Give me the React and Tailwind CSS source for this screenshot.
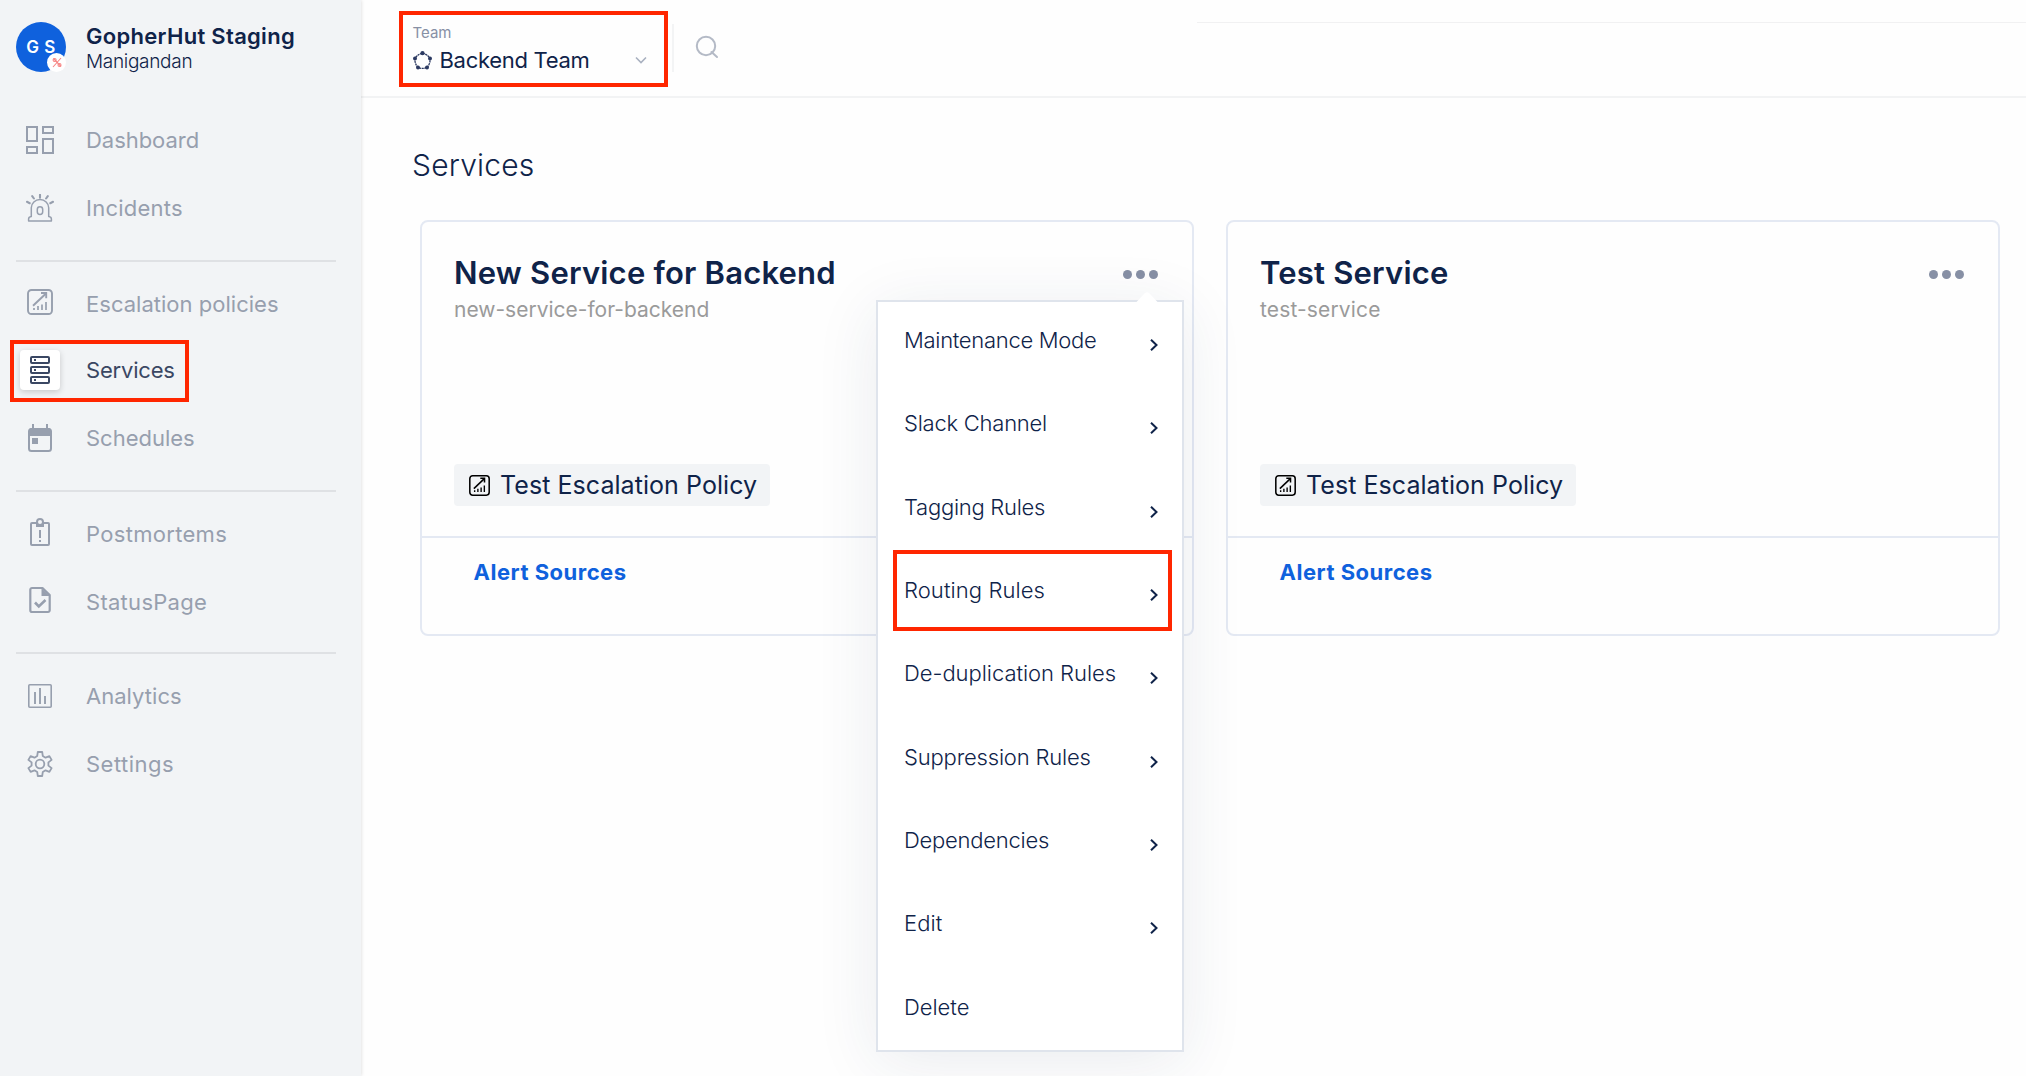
import React from "react";

function DashboardIcon() {
  return (
    <svg width="28" height="28" viewBox="0 0 28 28" fill="none" stroke="currentColor" strokeWidth="2">
      <path d="M1 1h10v14H1zM17 1h10v6H17zM1 21h10v6H1zM17 13h10v14H17z" />
    </svg>
  );
}

function IncidentsIcon() {
  return (
    <svg width="28" height="28" viewBox="0 0 28 28" fill="none" stroke="currentColor">
      <path d="M5.3 22.5V13.8a8.7 8.2 0 0 1 17.4 0v8.700c2 .3 2.700 1.200 2.700 2.500v1.900H2.600V25c0-1.300.7-2.200 2.700-2.500z" strokeWidth="1.500" strokeLinejoin="round" />
      <rect x="11.300" y="12.800" width="5.400" height="7.600" rx="2.700" strokeWidth="1.500" />
      <path d="M14 .8v3M6.200 2.200l1.700 2.300M21.800 2.200l-1.700 2.300M1 7.800l2.700 1.400M27 7.800l-2.700 1.400" strokeWidth="2.100" strokeLinecap="round" />
    </svg>
  );
}

function EscalationIcon({ size = 26 }) {
  return (
    <svg width={size} height={size} viewBox="0 0 26 26" fill="none" stroke="currentColor">
      <rect x="1" y="1" width="24" height="24" rx="3.500" strokeWidth="1.900" />
      <path d="M6 16.800L19 4.500" strokeWidth="1.900" />
      <path d="M14 4h5.200v5.200" strokeWidth="1.900" />
      <path d="M7 19v2M11 17v4M15 15.500V21M19 13v8" strokeWidth="1.700" />
    </svg>
  );
}

function ServicesIcon() {
  return (
    <svg width="20" height="28" viewBox="0 0 20 28" fill="none" stroke="currentColor" strokeWidth="2">
      <rect x="1" y="1" width="18" height="6" rx="1" />
      <rect x="1" y="11" width="18" height="6" rx="1" />
      <rect x="1" y="21" width="18" height="6" rx="1" />
      <path d="M4 4h2M4 14h2M4 24h2" />
    </svg>
  );
}

function SchedulesIcon() {
  return (
    <svg width="24" height="28" viewBox="0 0 24 28" fill="none">
      <rect x="1" y="5" width="22" height="22" rx="2.500" stroke="currentColor" strokeWidth="2" />
      <path d="M1 6.500A2.500 2.500 0 0 1 3.500 4h17A2.500 2.500 0 0 1 23 6.500V12H1zM4 0h2v5H4zM18 0h2v5h-2zM4 14h6v6H4z" fill="currentColor" />
    </svg>
  );
}

function PostmortemsIcon() {
  return (
    <svg width="20" height="28" viewBox="0 0 20 28" fill="none" stroke="currentColor">
      <rect x="1" y="5" width="18" height="22" rx="1" strokeWidth="2" />
      <path d="M6 5.500V9h8V5.500z" fill="currentColor" stroke="none" />
      <circle cx="10" cy="4" r="3" strokeWidth="2" fill="#f2f4f6" />
      <path d="M10 12v8M10 22v2" strokeWidth="2" />
    </svg>
  );
}

function StatusPageIcon() {
  return (
    <svg width="22" height="28" viewBox="0 0 22 28" fill="none" stroke="currentColor" strokeWidth="2.200">
      <path d="M13.500 2H3a1.700 1.700 0 0 0-1.700 1.700v20.600A1.700 1.700 0 0 0 3 26h16a1.700 1.700 0 0 0 1.700-1.700V9z" strokeLinejoin="round" />
      <path d="M12.500 2v8h8.200z" fill="currentColor" stroke="none" />
      <path d="M6 16.500l3.800 4L16.500 14" strokeWidth="2.600" />
    </svg>
  );
}

function AnalyticsIcon() {
  return (
    <svg width="24" height="24" viewBox="0 0 24 24" fill="none" stroke="currentColor">
      <rect x=".8" y=".8" width="22.400" height="22.400" rx="1" strokeWidth="1.600" />
      <path d="M7 8v12M12 4v16M17 12v8" strokeWidth="1.900" />
    </svg>
  );
}

function SettingsIcon() {
  return (
    <svg width="26" height="26" viewBox="0 0 26 26" fill="none" stroke="currentColor" strokeWidth="1.800" strokeLinejoin="round">
      <path d="M10.800 1h4.400l.6 4.100 2.700 1.600 3.900-1.600 2.200 3.800-3.200 2.500v3.200l3.200 2.500-2.200 3.800-3.900-1.600-2.700 1.600-.6 4.100h-4.400l-.6-4.100-2.700-1.600-3.900 1.600-2.200-3.800 3.200-2.500v-3.200L1.400 8.900l2.200-3.800 3.900 1.600 2.700-1.600z" />
      <circle cx="13" cy="13" r="4.300" />
    </svg>
  );
}

function TeamIcon() {
  return (
    <svg width="19" height="19" viewBox="0 0 19 19" fill="none">
      <path d="M9.500 2.200Q14.500 3.200 17 7.600Q17.500 12.500 14 16.500Q9.500 18.400 5 16.500Q1.500 12.500 2 7.600Q4.500 3.200 9.500 2.200" stroke="#2b3961" strokeWidth="1.300" strokeDasharray="2.200 .6" />
      <g fill="#2b3961">
        <circle cx="9.500" cy="2.200" r="2.100" />
        <circle cx="17" cy="7.600" r="2" />
        <circle cx="14" cy="16.500" r="2" />
        <circle cx="5" cy="16.500" r="2" />
        <circle cx="2" cy="7.600" r="2" />
      </g>
    </svg>
  );
}

function Chevron() {
  return (
    <svg className="relative top-[5px]" width="8" height="12" viewBox="0 0 8 12" fill="none" stroke="#0f2349" strokeWidth="2">
      <path d="M1 .8L6.500 6 1 11.200" />
    </svg>
  );
}

const groups = [
  [
    { label: "Dashboard", Icon: DashboardIcon, text: "tracking-[-0.04px]" },
    { label: "Incidents", Icon: IncidentsIcon, text: "tracking-[0.24px]" },
  ],
  [
    { label: "Escalation policies", Icon: EscalationIcon, text: "tracking-[0.02px] pt-1" },
    { label: "Services", Icon: ServicesIcon, text: "tracking-[-0.19px]", active: true },
    { label: "Schedules", Icon: SchedulesIcon, text: "tracking-[-0.02px]" },
  ],
  [
    { label: "Postmortems", Icon: PostmortemsIcon, text: "tracking-[0.31px] pt-1" },
    { label: "StatusPage", Icon: StatusPageIcon, text: "tracking-[0.28px] pt-1" },
  ],
  [
    { label: "Analytics", Icon: AnalyticsIcon, text: "tracking-[0.03px]" },
    { label: "Settings", Icon: SettingsIcon, text: "tracking-[0.48px]" },
  ],
];

const groupSpacing = ["pb-[18px]", "border-t-2 pt-[6px] pb-[18px]", "border-t-2 pt-[6px] pb-[18px]", "border-t-2 pt-2"];

function NavItem({ label, Icon, text, active }) {
  return (
    <li className="relative flex h-[68px] items-center">
      <span
        className={
          active
            ? "flex size-10 ml-1 items-center justify-center rounded bg-white text-[#3a4763] shadow-[0_2px_6px_rgba(0,0,0,0.18)]"
            : "flex size-10 ml-1 items-center justify-center text-[#979fae]"
        }
      >
        <Icon />
      </span>
      <span className={`ml-[26px] text-[22px] leading-6 ${text} ${active ? "text-[#3a4763]" : "text-[#979fae]"}`}>{label}</span>
      {active && <span className="absolute -left-[6px] top-1 h-[62px] w-[179px] border-4 border-[#ff2600]" />}
    </li>
  );
}

function Sidebar() {
  return (
    <aside className="z-10 flex w-[361px] shrink-0 flex-col bg-[#f2f4f6] px-4 pt-[22px] shadow-[0_0_4px_rgba(0,0,0,0.16)]">
      <div className="flex h-[84px] items-start">
        <div className="relative flex size-[50px] items-center justify-center rounded-full bg-[#0f61dd]">
          <span className="text-[17px] font-semibold leading-5 tracking-[0.5px] text-white">G S</span>
          <span className="absolute bottom-0 right-0 flex size-[19px] items-center justify-center rounded-full bg-white">
            <svg width="10" height="11" viewBox="0 0 10 11" fill="none" stroke="#f78584" strokeWidth="1.100">
              <path d="M1 10L9 1M1.500 1.500l7.500 8" />
              <circle cx="2.600" cy="3" r="1.500" />
              <circle cx="7.500" cy="8" r="1.500" />
            </svg>
          </span>
        </div>
        <div className="ml-5 flex flex-col">
          <span className="mt-[2px] text-[22px] font-semibold leading-[25px] tracking-[0.3px] text-[#0f2349]">GopherHut Staging</span>
          <span className="text-[19px] font-light leading-[25px] tracking-[-0.3px] text-[#0f2349]">Manigandan</span>
        </div>
      </div>
      <nav className="w-80">
        {groups.map((items, i) => (
          <ul key={items[0].label} className={`border-[#dfe1e4] ${groupSpacing[i]}`}>
            {items.map((item) => (
              <NavItem key={item.label} {...item} />
            ))}
          </ul>
        ))}
      </nav>
    </aside>
  );
}

function Header() {
  return (
    <header className="flex h-[98px] shrink-0 border-b-2 border-[#f2f3f4]">
      <div className="ml-[38px] mt-[11px] flex h-[76px] w-[269px] flex-col border-4 border-[#ff2600] pl-[9.5px] pr-[17px]">
        <span className="mt-[8px] text-[15px] leading-5 text-[#8790a5]">Team</span>
        <div className="mt-[5px] flex h-6 items-center">
          <TeamIcon />
          <span className="ml-[8px] text-[22px] leading-6 tracking-[-0.3px] text-[#0f2349]">Backend Team</span>
          <svg className="ml-auto" width="12" height="8" viewBox="0 0 12 8" fill="none" stroke="#a9b1c0" strokeWidth="1.600">
            <path d="M1 1.500l5 5 5-5" />
          </svg>
        </div>
      </div>
      <span className="ml-1 mt-6 h-12 w-[2px] bg-[#f3f4f5]" />
      <svg className="ml-[21px] mt-[35px]" width="24" height="24" viewBox="0 0 24 24" fill="none" stroke="#b4bac6" strokeWidth="2">
        <circle cx="11" cy="11" r="9.200" />
        <path d="M16.500 17l5.500 5" strokeLinecap="round" />
      </svg>
      <span className="ml-auto mt-[22px] h-px w-[829px] bg-[#f1f1f2]" />
    </header>
  );
}

function ServiceCard({ name, slug, nameTracking, slugTracking, children }) {
  return (
    <article className="relative flex h-[416px] w-[774px] flex-col rounded-lg border-2 border-[#e4e9f3]">
      <div className="flex h-[314px] flex-col items-start px-8">
        <div className="mt-[33px] flex h-9 w-full items-center justify-between pr-[2px]">
          <h2 className={`text-[31px] font-semibold leading-9 text-[#0f2349] ${nameTracking}`}>{name}</h2>
          <span className="flex gap-1 pt-[2px]">
            <span className="size-[9px] rounded-full bg-[#8790a5]" />
            <span className="size-[9px] rounded-full bg-[#8790a5]" />
            <span className="size-[9px] rounded-full bg-[#8790a5]" />
          </span>
        </div>
        <span className={`mt-[6px] text-[21px] leading-[25px] text-[#9a9a9a] ${slugTracking}`}>{slug}</span>
        <div className="mt-auto mb-[30px] flex h-[42px] w-[316px] items-center rounded bg-[#f2f4f6] pl-[15px] text-black">
          <EscalationIcon size={21} />
          <span className="ml-[10px] whitespace-nowrap text-[25px] leading-8 tracking-[0.06px] text-[#0f2349]">Test Escalation Policy</span>
        </div>
      </div>
      <div className="flex flex-1 border-t-2 border-[#e4e9f3] pl-[51.5px] pt-[21px]">
        <a className="text-[22px] font-bold leading-[26px] tracking-[0.5px] text-[#0f61dd]">Alert Sources</a>
      </div>
      {children}
    </article>
  );
}

const menu = [
  { label: "Maintenance Mode", tracking: "tracking-[-0.3px]" },
  { label: "Slack Channel", tracking: "tracking-[-0.24px]" },
  { label: "Tagging Rules", tracking: "tracking-[-0.27px]" },
  { label: "Routing Rules", tracking: "tracking-[0.08px]", marked: true },
  { label: "De-duplication Rules", tracking: "tracking-[-0.04px]" },
  { label: "Suppression Rules", tracking: "tracking-[-0.18px]" },
  { label: "Dependencies", tracking: "tracking-[-0.25px]" },
  { label: "Edit", tracking: "tracking-[0.1px]" },
  { label: "Delete", tracking: "tracking-[-0.04px]", leaf: true },
];

function ServiceMenu() {
  return (
    <div className="absolute left-[454px] top-[78px] z-20 h-[752px] w-[308px] border-2 border-[#dfe4ec] bg-white shadow-[0_10px_60px_rgba(30,50,90,0.09)]">
      <svg className="absolute -top-[10px] right-[24px]" width="22" height="11" viewBox="0 0 22 11">
        <path d="M0 10.500L8.500 1.500Q11-.8 13.500 1.500L22 10.500V11H0z" fill="#fff" />
      </svg>
      <ul className="flex h-full flex-col justify-between pt-[28px] pb-[33.5px] pl-[26px] pr-6">
        {menu.map(({ label, tracking, marked, leaf }) => (
          <li key={label} className="relative flex h-5 items-center justify-between">
            <span className={`whitespace-nowrap text-[22px] font-light leading-5 text-[#0f2349] ${tracking}`}>{label}</span>
            {!leaf && <Chevron />}
            {marked && <span className="absolute -left-[11px] -top-[30px] h-[81px] w-[279px] border-4 border-[#ff2600]" />}
          </li>
        ))}
      </ul>
    </div>
  );
}

export default function App() {
  return (
    <div className="flex h-[1076px] w-[2026px] overflow-hidden bg-white font-['Inter',sans-serif] antialiased">
      <Sidebar />
      <main className="flex min-w-0 flex-1 flex-col bg-[#fefefe]">
        <Header />
        <h1 className="ml-[51px] mt-[47px] text-[30px] font-light leading-10 tracking-[0.2px] text-[#0f2349]">Services</h1>
        <section className="ml-[59px] mt-[35px] flex gap-8">
          <ServiceCard name="New Service for Backend" slug="new-service-for-backend" nameTracking="tracking-[0.2px]" slugTracking="tracking-[0px]">
            <ServiceMenu />
          </ServiceCard>
          <ServiceCard name="Test Service" slug="test-service" nameTracking="tracking-[0.2px]" slugTracking="tracking-[0.15px]" />
        </section>
      </main>
    </div>
  );
}
